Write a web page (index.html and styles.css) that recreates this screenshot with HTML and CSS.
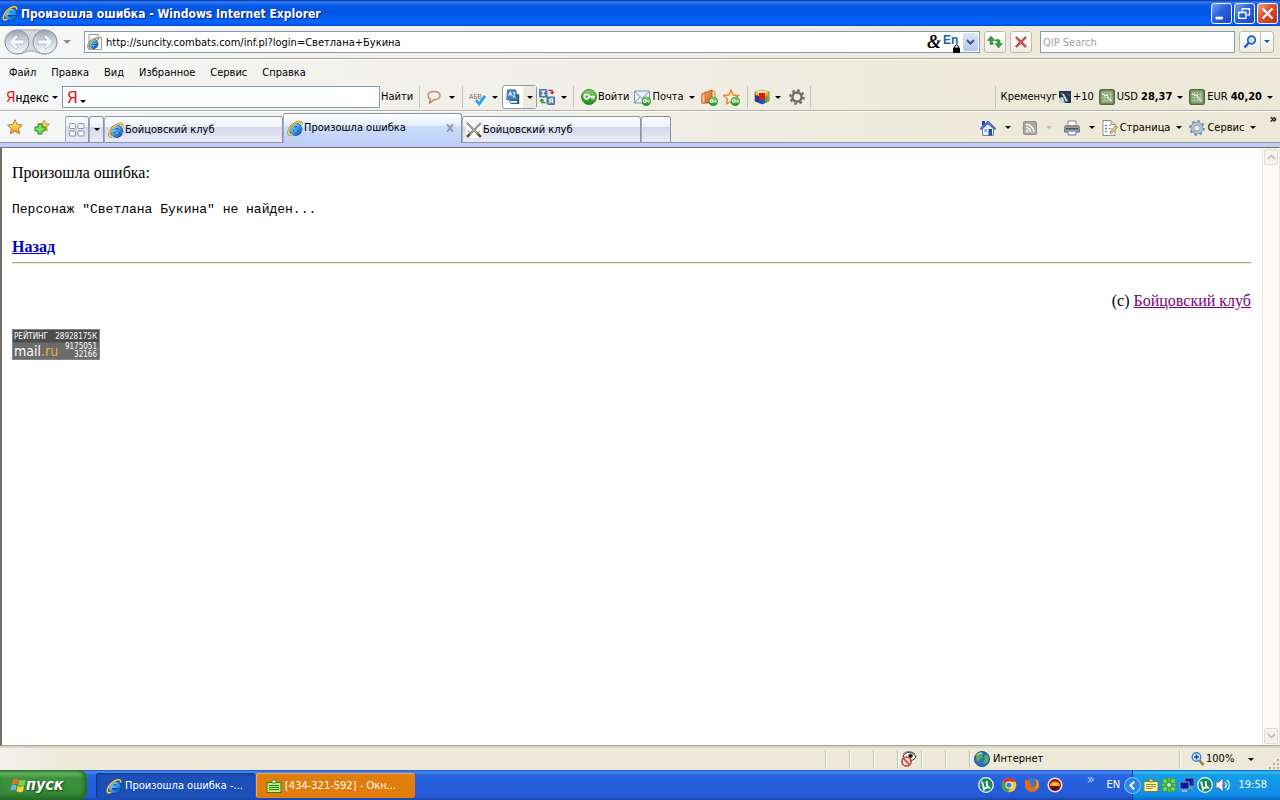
FILE: index.html
```html
<!DOCTYPE html>
<html lang="ru">
<head>
<meta charset="utf-8">
<title>Произошла ошибка</title>
<link rel="stylesheet" href="styles.css">
</head>
<body>
<svg class="defs" aria-hidden="true">
  <defs>
    <linearGradient id="gBlue" x1="0" y1="0" x2="1" y2="1"><stop offset="0" stop-color="#8fdcff"/><stop offset=".5" stop-color="#3aa0ee"/><stop offset="1" stop-color="#0f5cc0"/></linearGradient>
    <linearGradient id="gGold" x1="0" y1="0" x2="0" y2="1"><stop offset="0" stop-color="#fff3a0"/><stop offset="1" stop-color="#f49a12"/></linearGradient>
    <linearGradient id="gGreen" x1="0" y1="0" x2="0" y2="1"><stop offset="0" stop-color="#8bd46b"/><stop offset="1" stop-color="#1c8a1c"/></linearGradient>
    <linearGradient id="gSilver" x1="0" y1="0" x2="0" y2="1"><stop offset="0" stop-color="#9aa3b0"/><stop offset=".45" stop-color="#cfd6df"/><stop offset="1" stop-color="#eefaff"/></linearGradient>
    <linearGradient id="gOrange" x1="0" y1="0" x2="1" y2="1"><stop offset="0" stop-color="#ffb27a"/><stop offset="1" stop-color="#e0590d"/></linearGradient>
  </defs>
  <symbol id="ie" viewBox="0 0 16 16">
    <path d="M13 10.800A4.500 4.500 0 1 1 13.200 8.600H5" fill="none" stroke="#0c3f8c" stroke-width="4"/>
    <path d="M13 10.800A4.500 4.500 0 1 1 13.200 8.600H5" fill="none" stroke="url(#gBlue)" stroke-width="2.900"/>
    <path d="M14.500 4.500C15.200 1 12 .8 8 3.200 3.500 6 .8 10.500 1.300 13.500c.4 1.800 2.200 1.600 4 .7" fill="none" stroke="#8e6a2c" stroke-width="2"/>
    <path d="M14.500 4.500C15.200 1 12 .8 8 3.200 3.500 6 .8 10.500 1.300 13.500c.4 1.800 2.200 1.600 4 .7" fill="none" stroke="#ffcf4d" stroke-width="1.300"/>
  </symbol>
  <symbol id="page-ie" viewBox="0 0 16 16">
    <path d="M2 .5h9l3.500 3.500v11.500H2z" fill="#fff" stroke="#9a9a9a"/><path d="M11 .5V4h3.500" fill="#e6e6e6" stroke="#9a9a9a"/>
    <use href="#ie" x="0" y="3" width="12" height="12"/>
  </symbol>
  <symbol id="star" viewBox="0 0 16 16"><path d="M8 .8l2.200 4.700 5.100.6-3.800 3.500 1 5.100L8 12.200l-4.500 2.500 1-5.100L.7 6.100l5.100-.6z" fill="url(#gGold)" stroke="#b8791a"/></symbol>
  <symbol id="star-add" viewBox="0 0 16 16"><use href="#star" x="4" y="0" width="12" height="13"/><path d="M4 5h4v3h3v4H8v3H4v-3H1V8h3z" fill="#7be05a" stroke="#1b861b"/></symbol>
  <symbol id="tiles" viewBox="0 0 16 14"><g fill="#f6f8ff" stroke="#8b90a3"><rect x=".5" y=".5" width="6" height="5" rx="1"/><rect x="9" y=".5" width="6" height="5" rx="1"/><rect x=".5" y="8" width="6" height="5" rx="1"/><rect x="9" y="8" width="6" height="5" rx="1"/></g></symbol>
  <symbol id="swords" viewBox="0 0 16 16"><rect width="16" height="16" fill="#fff"/><path d="M1 1l11 11M15 1L4 12" stroke="#78787a" stroke-width="2"/><path d="M1 1l10 10M15 1L5 11" stroke="#d5d5d0" stroke-width=".6"/><path d="M10 12l4-3M6 12L2 9" stroke="#8a7454" stroke-width="1"/><path d="M12 12l3 3M4 12l-3 3" stroke="#6b4a2c" stroke-width="2.600"/></symbol>
  <symbol id="navpair" viewBox="0 0 56 28">
    <path d="M14 2h28a12 12 0 0 1 0 24c-8 0-8-3-14-3s-6 3-14 3A12 12 0 0 1 14 2z" fill="#d5d7da" stroke="#a9abb0"/>
    <circle cx="14" cy="14" r="12" fill="url(#gSilver)" stroke="#8e98a5"/><circle cx="42" cy="14" r="12" fill="url(#gSilver)" stroke="#8e98a5"/>
    <path d="M6 14l7-7 2 2-3 3h9v4h-9l3 3-2 2z" fill="#fff" stroke="#a9b4c0" stroke-width=".8"/><path d="M50 14l-7-7-2 2 3 3h-9v4h9l-3 3 2 2z" fill="#fff" stroke="#a9b4c0" stroke-width=".8"/>
  </symbol>
  <symbol id="refresh" viewBox="0 0 16 14"><path d="M4 1L.5 5.500H3V9.500h3V8H5.500V5.500H8z" fill="#3ba13b" stroke="#1e7a22" stroke-width=".5"/><path d="M11.500 13L8 8.500h2.500C10.500 6 9.500 6 8 5.500 10 3.500 13 4 13 6.500v2h2.500z" fill="#3ba13b" stroke="#1e7a22" stroke-width=".5"/></symbol>
  <symbol id="stop" viewBox="0 0 12 12"><path d="M1 1l10 10M11 1L1 11" stroke="#8f2f32" stroke-width="2.400"/><path d="M1 1l10 10M11 1L1 11" stroke="#dd6467" stroke-width="1.200"/></symbol>
  <symbol id="lens" viewBox="0 0 14 14"><circle cx="8.500" cy="5" r="3.800" fill="#cfe4ff" stroke="#1c58d0" stroke-width="1.700"/><path d="M5.600 8L1.500 12.500" stroke="#1c58d0" stroke-width="2.400"/></symbol>
  <symbol id="lock" viewBox="0 0 8 10"><path d="M2 5V3a2 2 0 0 1 4 0v2" fill="none" stroke="#000" stroke-width="1.200"/><path d="M0 4h8v6H0z"/></symbol>
  <symbol id="bubble" viewBox="0 0 14 14"><path d="M7 1.500c3.500 0 6 1.600 6 4s-2.500 4.200-6 4.200L2.500 13l.8-3.900C1.800 8.300 1 7 1 5.500c0-2.400 2.500-4 6-4z" fill="#f4f2ee" stroke="#d2734d" stroke-width="1.300"/><path d="M1.500 5C2 3 4 1.800 7 1.600c3.500 0 6 1.700 5.800 4" fill="none" stroke="#b5a69d"/></symbol>
  <symbol id="check" viewBox="0 0 11 11"><path d="M1 5l3.300 4L10 .8" fill="none" stroke="#1ba4f5" stroke-width="2.600"/></symbol>
  <symbol id="books" viewBox="0 0 16 18"><path d="M5 6h10v11H6z" fill="#1d6275"/><path d="M4 13h9v3H5z" fill="#f4f9ff" stroke="#0e4355" stroke-width=".7"/><path d="M2 1h9l2 11H1z" fill="#4688bd" stroke="#2c6799"/><path d="M3 8l2-5 2 5M3.800 6h2.500M8 4h2L8.500 9H11" fill="none" stroke="#fff"/></symbol>
  <symbol id="translate" viewBox="0 0 17 17"><path d="M.5.500h7l1 1v7h-8z" fill="#5c86b4" stroke="#4771a0"/><path d="M2.500 2.500h4M4.500 2.500v4M2.500 6.500h4" stroke="#fff" stroke-width="1.200"/><path d="M8.500 8.500h8v8h-7l-1-1z" fill="#5c86b4" stroke="#4771a0"/><path d="M14.500 15v-4.500h-2a1 1 0 0 0 0 2.500h2M12.500 13L11 15" fill="none" stroke="#fff" stroke-width="1.200"/><path d="M10 1.500h4V4M12 3l2 2 2-2" fill="none" stroke="#bd2830" stroke-width="1.300"/><path d="M7 14.500H3V12M1 13l2-2 2 2" fill="none" stroke="#169222" stroke-width="1.300"/></symbol>
  <symbol id="key" viewBox="0 0 16 16"><circle cx="8" cy="8" r="7.500" fill="url(#gGreen)" stroke="#278c2c"/><circle cx="5.600" cy="7.600" r="2.300" fill="none" stroke="#fff" stroke-width="1.700"/><path d="M8 7.600h6M12.500 8v2.500M10.500 8v1.500" stroke="#fff" stroke-width="1.500"/></symbol>
  <symbol id="mail-key" viewBox="0 0 17 17"><path d="M.5 2h15v12H.5z" fill="#e7f0fa" stroke="#7895b5"/><path d="M.5 2L8 9.500 15.500 2M.5 14L6 8" fill="none" stroke="#7895b5"/><use href="#key" x="7.500" y="7.500" width="9.500" height="9.500"/></symbol>
  <symbol id="book-key" viewBox="0 0 17 17"><path d="M1 5l10-4v13H1z" fill="url(#gOrange)" stroke="#bd5b1d"/><path d="M1 5l3-1v10H1z" fill="#ffc597" stroke="#bd5b1d" stroke-width=".7"/><path d="M11 1l3 2v6" fill="none" stroke="#d97a3a"/><use href="#key" x="7.500" y="7.500" width="9.500" height="9.500"/></symbol>
  <symbol id="star-key" viewBox="0 0 17 17"><path d="M8 1l2 5 5.500.5-4 3.500 1 5L8 12.500 3.500 15l1-5-4-3.500L6 6z" fill="#fff3e2" stroke="#ec8524" stroke-width="1.400"/><use href="#key" x="7.500" y="7.500" width="9.500" height="9.500"/></symbol>
  <symbol id="cube" viewBox="0 0 16 16"><path d="M1 3l7-2 7 2v9l-7 3-7-3z" fill="#e8bd22" stroke="#827d56"/><path d="M1 3l7 2 7-2-7-2z" fill="#f0e9ac"/><path d="M1 6l4 1v7l-4-2z" fill="#1f3f96"/><path d="M11 7l4-1v6l-4 2z" fill="#72a83b"/><path d="M5 4h6v7H5z" fill="#dc1a1b"/><path d="M5 11h6v3l-3 1-3-1z" fill="#214ec4"/></symbol>
  <symbol id="gear" viewBox="0 0 16 16"><circle cx="8" cy="8" r="6.700" fill="none" stroke="currentColor" stroke-width="2.200" stroke-dasharray="2.630 2.630"/><circle cx="8" cy="8" r="4.600" fill="none" stroke="currentColor" stroke-width="2.500"/></symbol>
  <symbol id="weather" viewBox="0 0 12 12"><rect width="12" height="12" fill="#233547"/><path d="M0 12V7l4-1 2 6zM2 2l3 1 4 7-2 1-3-6z" fill="#c3d4df"/><path d="M7 1l4 2v3z" fill="#46637c"/></symbol>
  <symbol id="chart" viewBox="0 0 16 16"><rect x=".8" y=".8" width="14.400" height="14.400" rx="2" fill="#8da678" stroke="#4d6e40" stroke-width="1.600"/><path d="M3 5.500h10M3 8.500h10M3 11.500h10M5.500 3v10M8.500 3v10M11.500 3v10" stroke="#b4c6a5" stroke-width=".8"/><path d="M3 4l3 3 2-1 2 4 3 2" fill="none" stroke="#fff" stroke-width="1"/></symbol>
  <symbol id="home" viewBox="0 0 16 16"><path d="M2.500 8v7.500h11V8L8 3z" fill="#e8eefc" stroke="#6d83b2"/><path d="M0 8.500L8 1l8 7.500-1.500 1L8 3.800 1.500 9.500z" fill="#5a78c9" stroke="#2e4b99" stroke-width=".7"/><path d="M2 1h3v3L2 6z" fill="#2743a8"/><path d="M8.500 9h3.500v6.500H8.500z" fill="#234fa3"/><path d="M4.500 9H7v3H4.500z" fill="#8fa5cd"/></symbol>
  <symbol id="rss" viewBox="0 0 14 14"><rect x=".5" y=".5" width="13" height="13" rx="1.500" fill="#aaa9a3" stroke="#8f8e88"/><circle cx="4" cy="10.300" r="1.300" fill="#fff"/><path d="M3 6.500a4.500 4.500 0 0 1 4.500 4.800M3 3.300a7.800 7.800 0 0 1 7.800 8" fill="none" stroke="#fff" stroke-width="1.500"/></symbol>
  <symbol id="printer" viewBox="0 0 16 16"><path d="M4 1h8v5H4z" fill="#fff" stroke="#85888d"/><path d="M1 6h14l.5 6H.5z" fill="#a3a5ab" stroke="#66686e"/><path d="M2 8h12v1.500H2z" fill="#4f5258"/><path d="M4 11h8v4H4z" fill="#e4f2fd" stroke="#6780a0"/></symbol>
  <symbol id="sheet" viewBox="0 0 16 16"><path d="M1 .5h8l4 4v11H1z" fill="#fff" stroke="#8d9092"/><path d="M9 .5v4h4" fill="#ddd" stroke="#8d9092"/><path d="M3 5.500h2M3 8.500h2M3 11.500h2" stroke="#6c7fae" stroke-width="1.500"/><path d="M6.500 5.500h2M6.500 8.500h3" stroke="#9a9a9a"/><path d="M8 13.500l1-3 5-5 1.500 2-5 5z" fill="#f3c56b" stroke="#83683a" stroke-width=".7"/></symbol>
  <symbol id="cog" viewBox="0 0 16 16"><circle cx="8" cy="8" r="6.800" fill="none" stroke="#7894ad" stroke-width="2.200" stroke-dasharray="2.670 2.670"/><circle cx="8" cy="8" r="4.500" fill="none" stroke="#6985a0" stroke-width="3.500"/><circle cx="8" cy="8" r="4.500" fill="none" stroke="#a9c4dc" stroke-width="2.500"/></symbol>
  <symbol id="eye" viewBox="0 0 16 16"><path d="M2 5c3-5 10-5 13 1-2 4-8 5-12 1z" fill="#fff" stroke="#222" stroke-width="1"/><path d="M2 3C5-.5 11 0 14 3" fill="none" stroke="#777"/><circle cx="9.500" cy="5" r="2.400" fill="#555"/><circle cx="9.500" cy="5" r="1.200"/><circle cx="5.500" cy="10.500" r="4.500" fill="#fbe3df" stroke="#cc3b32" stroke-width="1.600"/><path d="M2.500 7.500l6 6" stroke="#cc3b32" stroke-width="1.600"/></symbol>
  <symbol id="globe" viewBox="0 0 16 16"><circle cx="8" cy="8" r="7.500" fill="#2d6fc0" stroke="#1e5078"/><path d="M2 4c2-3 5-3 7-2L8 5l1 2-3 1-1 3-3-3zM10 5l4-1 1 5-3 4-3-2 2-3z" fill="#51b05c"/><path d="M3 4c2-2 4-2 5-2" stroke="#d5f1dc" fill="none"/></symbol>
  <symbol id="zoom" viewBox="0 0 14 14"><path d="M8 8l4.500 5" stroke="#a6773c" stroke-width="2.500"/><circle cx="5.500" cy="5" r="4.300" fill="#d3eaff" stroke="#4981c5" stroke-width="1.400"/><path d="M3 5h5M5.500 2.500v5" stroke="#174ab5" stroke-width="1.600"/></symbol>
  <symbol id="winflag" viewBox="0 0 16 16"><path d="M3 2.500c2-1.500 3.500-1.200 5-.3L7 7.500C5.500 6.500 4 6.500 2 7.800z" fill="#f3682f"/><path d="M9 2.700c2 1 4 1 6.500-.2l-1 5.500c-2.500 1.200-4.500 1-6.500 0z" fill="#8bd13f"/><path d="M1.500 8.800c2-1.500 3.500-1.200 5-.3L5.500 13.500c-1.500-1-3-1-5 .3z" fill="#72aef8"/><path d="M7.500 9c2 1 4 1 6.500-.2l-1 5.500c-2.500 1.200-4.500 1-6.500 0z" fill="#fbd43b"/></symbol>
  <symbol id="note" viewBox="0 0 16 14"><path d="M1 3.500h14v10H1z" fill="#fff6a9" stroke="#7b7c28"/><path d="M6 1h4v3H6z" fill="#e6d53d" stroke="#7b7c28" stroke-width=".8"/><path d="M3 6.500h10M3 8.500h10M3 10.500h7" stroke="#8f8e37"/></symbol>
  <symbol id="note-green" viewBox="0 0 16 14"><path d="M1 3.500h14v10H1z" fill="#b6ed80" stroke="#327f1a"/><path d="M6 1h4v3H6z" fill="#e1f7a2" stroke="#327f1a" stroke-width=".8"/><path d="M3 6.500h10M3 8.500h10M3 10.500h10" stroke="#33801b"/></symbol>
  <symbol id="utorrent" viewBox="0 0 16 16"><circle cx="8" cy="8" r="7.300" fill="#18885b" stroke="#e9f7ef" stroke-width="1.300"/><path d="M4 4.500l1.500 5.500c.5 1.500 3.500 1.500 3.800-.5L8.500 4M9.300 9c.6 1.700 1.700 2 3 1.500M5.300 9.500l1 4" fill="none" stroke="#fff" stroke-width="1.800"/></symbol>
  <symbol id="chrome" viewBox="0 0 16 16"><circle cx="8" cy="8" r="7.300" fill="#f5cb30"/><path d="M8 8L1.700 4.300A7.300 7.300 0 0 1 14.500 4.800H8z" fill="#d7372b"/><path d="M8 8L1.700 4.300A7.300 7.300 0 0 0 7 15.200L10 10z" fill="#43a147"/><circle cx="8" cy="8" r="3.500" fill="#fff"/><circle cx="8" cy="8" r="2.600" fill="#3e83cf"/></symbol>
  <symbol id="firefox" viewBox="0 0 16 16"><circle cx="8" cy="7.500" r="6.500" fill="#3c78c0"/><path d="M1 2l2 2C4 3.200 5.500 3.200 7 4L5.500 6 8 7.500 6 9c1.500 2 4 1.500 5.500-.5C12.500 6 12 3 10.500 1.500c4 1.500 5.500 5.500 4.500 8.500-1 3-4 5-7 5-4 0-7-3-7-6.500C1 6.500.5 4.500 1 2z" fill="#e5691a"/><path d="M12.500 3c2 3 1.500 6.500-1 8.500" fill="none" stroke="#f7b52e" stroke-width="1.300"/></symbol>
  <symbol id="qip" viewBox="0 0 16 16"><circle cx="8" cy="8" r="6.800" fill="#8f1713" stroke="#f5dad3" stroke-width="1.600"/><path d="M3 9c0-6 10-6 10 0z" fill="#f39b2f"/><path d="M4 9.500h8v2.500c-2 2-6 2-8 0z" fill="#4d0c10"/><path d="M5 7h6" stroke="#ffd75a" stroke-width="1.500"/></symbol>
  <symbol id="flower" viewBox="0 0 16 16"><g fill="#7bd648" stroke="#378f22" stroke-width=".6"><path d="M8 8L6.500 1 9.500 1zM8 8L6.500 15h3zM8 8L1 6.500v3zM8 8l7-1.500v3z"/><circle cx="4" cy="4" r="2.500"/><circle cx="12" cy="4" r="2.500"/><circle cx="4" cy="12" r="2.500"/><circle cx="12" cy="12" r="2.500"/></g><circle cx="8" cy="8" r="2" fill="#c9f39c"/></symbol>
  <symbol id="net" viewBox="0 0 16 16"><path d="M6 1h9v8H6z" fill="#0c2494" stroke="#6f8bc4"/><path d="M9 10h5v2H9z" fill="#8090b6"/><path d="M1 5h9v7H1z" fill="#0a1c9c" stroke="#7d99d0"/><path d="M3 13h5v2H3z" fill="#aab4ca"/></symbol>
  <symbol id="sound" viewBox="0 0 16 16"><path d="M1 5h3l4-4v14l-4-4H1z" fill="#f4f5f5" stroke="#66737e"/><path d="M10 5c1.500 2 1.500 4 0 6M12 3c3 3 3 7 0 10" fill="none" stroke="#fff" stroke-width="1.200"/></symbol>
  <symbol id="grip" viewBox="0 0 12 12"><path d="M9 1h2v2H9zM9 5h2v2H9zM9 9h2v2H9zM5 5h2v2H5zM5 9h2v2H5zM1 9h2v2H1z" fill="#b9b5a3"/></symbol>
</svg>

<header class="titlebar">
  <svg class="i16"><use href="#ie"/></svg>
  <h1>Произошла ошибка - Windows Internet Explorer</h1>
  <div class="winbtns">
    <button class="wb" aria-label="Свернуть"><svg viewBox="0 0 21 21"><path d="M4 14h8v3H4z" fill="#fff"/></svg></button>
    <button class="wb" aria-label="Восстановить"><svg viewBox="0 0 21 21"><path d="M8 8V5h8v7h-3M8 5.500h8M4 9h8v7H4zM4 9.500h8" fill="none" stroke="#fff" stroke-width="1.400"/></svg></button>
    <button class="wb close" aria-label="Закрыть"><svg viewBox="0 0 21 21"><path d="M5 5l11 11M16 5L5 16" stroke="#fff" stroke-width="2.400"/></svg></button>
  </div>
</header>

<div class="chrome">
  <div class="nav">
    <button class="plain" aria-label="Назад и вперёд"><svg class="navpair"><use href="#navpair"/></svg></button>
    <button class="plain dd grey" aria-label="История"></button>
    <div class="address">
      <svg class="i16"><use href="#page-ie"/></svg>
      <input type="text" aria-label="Адрес" value="http://suncity.combats.com/inf.pl?login=Светлана+Букина">
      <span class="amp">&amp;</span><span class="en">En<svg><use href="#lock"/></svg></span>
      <button class="combo" aria-label="Список адресов"><svg viewBox="0 0 9 6"><path d="M1 1l3.500 3.500L8 1" fill="none" stroke="#40507c" stroke-width="2"/></svg></button>
    </div>
    <button class="sq" aria-label="Обновить"><svg class="i16"><use href="#refresh"/></svg></button>
    <button class="sq" aria-label="Стоп"><svg class="i12"><use href="#stop"/></svg></button>
    <input class="search" type="text" aria-label="Поиск" placeholder="QIP Search">
    <div class="split"><button aria-label="Найти"><svg class="i14"><use href="#lens"/></svg></button><button class="dd blue" aria-label="Параметры поиска"></button></div>
  </div>

  <nav class="menu">
    <button>Файл</button><button>Правка</button><button>Вид</button><button>Избранное</button><button>Сервис</button><button>Справка</button>
  </nav>

  <div class="yandex">
    <button class="logo"><b>Я</b>ндекс</button><button class="dd" aria-label="Меню Яндекса"></button>
    <div class="ybox"><span class="ya">Я</span><i class="dd low"></i><input type="text" aria-label="Поиск в Яндексе"></div>
    <button class="find">Найти</button>
    <div class="grp g1"><button aria-label="Комментарии"><svg class="i14"><use href="#bubble"/></svg></button><button class="dd" aria-label="Ещё"></button></div>
    <div class="grp g2">
      <button class="abv" aria-label="Орфография"><small>АБВ</small><svg><use href="#check"/></svg></button><button class="dd" aria-label="Ещё"></button>
      <div class="pressed"><button aria-label="Словарь"><svg class="i16"><use href="#books"/></svg></button><button class="dd" aria-label="Ещё"></button></div>
      <button aria-label="Перевод"><svg class="i16"><use href="#translate"/></svg></button><button class="dd" aria-label="Ещё"></button>
    </div>
    <div class="grp g3">
      <button class="lbl"><svg class="i16"><use href="#key"/></svg>Войти</button>
      <button class="lbl mail"><svg class="i17"><use href="#mail-key"/></svg>Почта</button><button class="dd" aria-label="Ещё"></button>
      <button class="mid" aria-label="Закладки"><svg class="i17"><use href="#book-key"/></svg></button>
      <button aria-label="Избранное"><svg class="i17"><use href="#star-key"/></svg></button>
    </div>
    <div class="grp g4"><button aria-label="Виджеты"><svg class="i16"><use href="#cube"/></svg></button><button class="dd" aria-label="Ещё"></button><button class="gearbtn" aria-label="Настройки"><svg class="i16"><use href="#gear"/></svg></button></div>
    <div class="rates">
      <button class="lbl wx">Кременчуг <svg class="i12"><use href="#weather"/></svg>+10</button>
      <button class="lbl"><svg class="i16"><use href="#chart"/></svg>USD <b>28,37</b></button><button class="dd" aria-label="USD"></button>
      <button class="lbl"><svg class="i16"><use href="#chart"/></svg>EUR <b>40,20</b></button><button class="dd" aria-label="EUR"></button>
    </div>
  </div>

  <div class="tabrow">
    <button class="fav" aria-label="Избранное"><svg class="i16"><use href="#star"/></svg></button>
    <button class="fav" aria-label="Добавить"><svg class="i16"><use href="#star-add"/></svg></button>
    <div class="tabs">
      <button class="tab mini" aria-label="Быстрые вкладки"><svg class="i16"><use href="#tiles"/></svg></button>
      <button class="tab ddtab" aria-label="Список вкладок"><i class="dd"></i></button>
      <button class="tab"><svg class="i16"><use href="#ie"/></svg>Бойцовский клуб</button>
      <button class="tab active"><svg class="i16"><use href="#ie"/></svg>Произошла ошибка<svg class="x" viewBox="0 0 8 8"><path d="M1 0l6 8M7 0L1 8" stroke="#8c95a3" stroke-width="1.800"/></svg></button>
      <button class="tab"><svg class="i16"><use href="#swords"/></svg>Бойцовский клуб</button>
      <button class="tab new" aria-label="Новая вкладка"></button>
    </div>
    <div class="cmds">
      <button aria-label="Домой"><svg class="i16"><use href="#home"/></svg></button><button class="dd" aria-label="Ещё"></button>
      <button aria-label="Каналы"><svg class="i14"><use href="#rss"/></svg></button><button class="dd off" aria-label="Ещё"></button>
      <button aria-label="Печать"><svg class="i16"><use href="#printer"/></svg></button><button class="dd" aria-label="Ещё"></button>
      <button class="lbl"><svg class="i16"><use href="#sheet"/></svg>Страница</button><button class="dd" aria-label="Ещё"></button>
      <button class="lbl"><svg class="i16"><use href="#cog"/></svg>Сервис</button><button class="dd" aria-label="Ещё"></button>
      <span class="more">»</span>
    </div>
  </div>
</div>

<main class="view">
  <article>
    <p>Произошла ошибка:</p>
    <pre>Персонаж "Светлана Букина" не найден...</pre>
    <p class="back"><a href="#">Назад</a></p>
    <hr>
    <p class="copy">(c) <a href="#">Бойцовский клуб</a></p>
    <a class="counter" href="#">
      <span class="c1">РЕЙТИНГ</span><span class="c2">28928175К</span>
      <span class="c3">mail<em>.ru</em></span><span class="c4">9175051<br>32166</span>
    </a>
  </article>
  <div class="scroll">
    <button aria-label="Вверх"><svg viewBox="0 0 9 6"><path d="M1 5l3.500-3.500L8 5" fill="none" stroke="#c4c2b6" stroke-width="1.800"/></svg></button>
    <button aria-label="Вниз"><svg viewBox="0 0 9 6"><path d="M1 1l3.500 3.500L8 1" fill="none" stroke="#c4c2b6" stroke-width="1.800"/></svg></button>
  </div>
</main>

<footer class="status">
  <span class="cell"></span><span class="cell"></span><span class="cell"></span>
  <span class="cell"><svg class="i16"><use href="#eye"/></svg></span><span class="cell"></span><span class="cell"></span>
  <span class="zone"><svg class="i16"><use href="#globe"/></svg>Интернет</span>
  <button class="zoomer"><svg class="i14"><use href="#zoom"/></svg>100%<i class="dd"></i></button>
  <svg class="i12 grip"><use href="#grip"/></svg>
</footer>

<div class="taskbar">
  <button class="start"><svg><use href="#winflag"/></svg>пуск</button>
  <button class="task on"><svg class="i16"><use href="#ie"/></svg>Произошла ошибка -...</button>
  <button class="task alert"><svg class="i16"><use href="#note-green"/></svg>[434-321-592] - Окн...</button>
  <div class="quick"><svg class="i16"><use href="#utorrent"/></svg><svg class="i16"><use href="#chrome"/></svg><svg class="i16"><use href="#firefox"/></svg><svg class="i16"><use href="#qip"/></svg></div>
  <span class="chev">»</span>
  <span class="lang">EN</span>
  <div class="tray">
    <button class="expand" aria-label="Показать значки"><svg viewBox="0 0 16 16"><circle cx="8" cy="8" r="7.500" fill="#2a86e8" stroke="#79c1ff"/><path d="M9.500 4.500L6 8l3.500 3.500" fill="none" stroke="#fff" stroke-width="2"/></svg></button>
    <svg class="i16"><use href="#note"/></svg><svg class="i16"><use href="#flower"/></svg><svg class="i16"><use href="#net"/></svg><svg class="i16"><use href="#utorrent"/></svg><svg class="i16"><use href="#sound"/></svg>
    <time>19:58</time>
  </div>
</div>
</body>
</html>
```
FILE: styles.css
```css
* { box-sizing: border-box; }
body {
  margin: 0; min-height: 100vh; display: flex; flex-direction: column;
  font: 11px/14px "DejaVu Sans Condensed", Tahoma, sans-serif; color: #000; background: #ece9d8;
}
.defs { position: absolute; width: 0; height: 0; }
button { font: inherit; color: inherit; background: none; border: 0; padding: 0; margin: 0; display: flex; align-items: center; white-space: nowrap; flex: none; }
input { font: inherit; min-width: 0; }
svg { flex: none; display: block; }
.i17 { width: 17px; height: 17px; }
.i16 { width: 16px; height: 16px; }
.i14 { width: 14px; height: 14px; }
.i12 { width: 12px; height: 12px; }

.dd { width: 5px; flex: none; display: block; }
.dd::before { content: ""; display: block; border: solid transparent; border-width: 3px 3px 0; border-top-color: #000; width: 0; }
.dd.grey::before { border-width: 4px 4px 0; border-top-color: #8e9196; }
.dd.off::before { border-top-color: #c2c0b4; }
.dd.blue::before { border-top-color: #1c50b8; }

.titlebar {
  height: 26px; display: flex; align-items: center; padding: 0 2px;
  background: linear-gradient(#0831a8 0, #2f80f5 2px, #0a5be8 5px, #0053e1 12px, #0464fb 20px, #0460f8 24px, #0343c8 26px);
}
.titlebar h1 { flex: 1; margin: 1px 0 0 3px; font: bold 12px/16px "DejaVu Sans Condensed", sans-serif; color: #fff; text-shadow: 1px 1px 1px #0a1883; }
.winbtns { display: flex; gap: 2px; }
.wb { width: 21px; height: 21px; border: 1px solid #fff; border-radius: 3px; background: linear-gradient(135deg, #7ba0f2, #2a5fe0 45%, #1c48c4); }
.wb svg { width: 19px; height: 19px; }
.wb.close { background: linear-gradient(135deg, #f0a08a, #dc5030 45%, #bf3412); }

.chrome { background: linear-gradient(90deg, #f5f6f7 0, #f1f0ea 35%, #ece9d8 85%); }
.nav { height: 33px; display: flex; align-items: center; padding: 0 6px 0 3px; border-bottom: 1px solid #aaa698; }
.navpair { width: 56px; height: 28px; }
.nav .dd.grey { width: 8px; margin: 0 13px 0 4px; }
.address { flex: 1; height: 22px; display: flex; align-items: center; border: 1px solid #7f9db9; background: #fff; padding: 0 1px 0 2px; }
.address input { flex: 1; border: 0; background: none; padding: 1px 0 0 3px; outline: 0; }
.amp { font: bold italic 18px/20px "Liberation Serif", serif; width: 16px; }
.en { font: bold 12px/16px "Liberation Sans", sans-serif; color: #1866a5; position: relative; width: 20px; margin-bottom: 4px; }
.en svg { position: absolute; right: 3px; bottom: -5px; width: 7px; height: 9px; }
.combo { width: 15px; height: 18px; border-radius: 2px; justify-content: center; background: linear-gradient(#dbe5fc, #b3c7f5); }
.combo svg { width: 9px; height: 6px; }
.sq, .split { height: 22px; border: 1px solid #bdbcb4; border-radius: 3px; background: linear-gradient(#fff, #ecebe6); }
.sq { width: 22px; justify-content: center; margin-left: 4px; }
.search { width: 195px; height: 22px; margin: 0 4px 0 8px; border: 1px solid #7f9db9; background: #fff; padding: 1px 2px 0; }
.search::placeholder { color: #a5a296; opacity: 1; }
.split { display: flex; width: 35px; }
.split button:first-child { width: 21px; justify-content: center; border-right: 1px solid #bdbcb4; }
.split .dd { margin: 8px 0 0 3px; align-self: flex-start; }

.menu { height: 25px; display: flex; align-items: center; gap: 15px; padding: 1px 0 0 9px; border-top: 1px solid #fff; }

.yandex { height: 27px; display: flex; align-items: center; padding: 0 8px 0 6px; border-bottom: 1px solid #b3b0a4; }
.yandex .logo { font: 12px/18px Roboto, sans-serif; width: 46px; align-items: baseline; }
.logo b, .ya { font-weight: normal; color: #e8141b; }
.logo b { font-size: 15px; }
.ybox { width: 318px; height: 22px; margin: 0 1px 0 5px; border: 1px solid #7f9db9; background: #fff; display: flex; align-items: center; padding-left: 4px; }
.ya { font: 17px/20px Roboto, sans-serif; width: 13px; }
.low { margin-top: 8px; }
.ybox input { flex: 1; border: 0; background: none; outline: 0; }
.find { width: 38px; }
.grp { display: flex; align-items: center; height: 22px; border-left: 1px solid #c8c5b5; }
.g1 { padding-left: 7px; gap: 8px; width: 43px; }
.g2 { padding-left: 6px; width: 111px; }
.g2 > .dd { margin-left: 6px; }
.abv { width: 17px; display: block; height: 18px; position: relative; }
.abv small { font: 7px/7px "DejaVu Sans Mono", monospace; color: #777; display: block; text-align: left; }
.abv svg { width: 11px; height: 11px; position: absolute; right: 0; bottom: 0; }
.pressed { width: 35px; height: 24px; margin: 0 2px 0 5px; display: flex; align-items: center; border: 1px solid #8c9bab; border-radius: 3px; background: #fff; }
.pressed button:first-child { width: 20px; justify-content: center; }
.pressed .dd { width: 13px; height: 22px; background: #eceadf; padding: 0 4px; display: flex; }
.lbl { gap: 2px; }
.lbl b { margin-left: 1px; }
.g3 { padding-left: 7px; width: 174px; }
.g3 .lbl { gap: 1px; }
.g3 .mail { margin: 0 5px; }
.g3 .mid { margin: 0 5px 0 7px; }
.g4 { padding-left: 6px; width: 64px; border-right: 1px solid #c8c5b5; }
.g4 .dd { margin: 0 9px 0 5px; }
.gearbtn { color: #6d6d6b; }
.rates { margin-left: auto; height: 22px; display: flex; align-items: center; gap: 5px; padding-left: 5px; border-left: 1px solid #c8c5b5; }
.rates .dd + .lbl { margin-left: 2px; }

.tabrow { height: 36px; display: flex; padding-left: 7px; border-top: 1px solid #fff; border-bottom: 4px solid #c2cdf3; box-shadow: inset 0 -1px #8c93a8; }
.fav { width: 27px; height: 30px; }
.tabs { display: flex; align-items: flex-end; margin-left: 4px; }
.tab { width: 179px; height: 27px; gap: 1px; padding: 0 3px; border: 1px solid #8c93a8; border-left-color: #a8adbd; border-radius: 3px 3px 0 0; background: linear-gradient(#fdfdff 0, #eef0f8 40%, #d4d8ec 41%, #e9ecf7 100%); }
.mini { width: 24px; padding: 0 3px; }
.mini svg { height: 14px; }
.ddtab { width: 15px; padding: 0 4px; }
.active { height: 30px; border-bottom: 0; padding-bottom: 2px; background: linear-gradient(#fff 0, #e3eefd 40%, #cadefb 41%, #bfd0f8 100%); }
.x { width: 8px; height: 8px; margin: 0 4px 0 auto; }
.tab.new { width: 30px; }
.cmds { margin-left: auto; height: 31px; display: flex; align-items: center; padding-right: 3px; gap: 9px; }
.cmds .dd + button { margin-left: 4px; }
.cmds .lbl + .dd { margin-left: -3px; }
.cmds .dd + .lbl { margin-left: -1px; }
.more { font: bold 13px/14px "DejaVu Sans Condensed", sans-serif; align-self: flex-start; margin-left: 5px; }

.view { flex: 1; display: flex; background: #fff; border: solid #716f64; border-width: 1px 0 0 2px; border-right: 1px solid #ece9d8; border-bottom: 1px solid #aaa79a; }
article { flex: 1; padding: 16px 11px 0 10px; font: 16px/18px "Liberation Serif", "Times New Roman", serif; }
article p { margin: 0; }
article pre { margin: 20px 0; font: 13px/16px "Liberation Mono", monospace; }
.back { font-weight: bold; }
.back a { color: #00c; }
hr { height: 2px; margin: 6px 0 28px; border: 0; border-top: 1px solid #aca899; border-bottom: 1px solid #ece9d8; }
.copy { text-align: right; }
.copy a { color: #800080; }
.counter { width: 88px; height: 31px; margin-top: 19px; display: grid; grid-template-columns: 38px 1fr; grid-template-rows: 12px 1fr; padding: 1px 2px 0 1px; border: 1px solid #858585; background: linear-gradient(#4d4d4d 12px, #6b6b6b 13px); color: #fff; font: 8px/8px "DejaVu Sans Condensed", sans-serif; text-decoration: none; }
.c1, .c2 { padding-top: 2px; }
.c2, .c4 { text-align: right; }
.c3 { font: 14px/16px "DejaVu Sans Condensed", sans-serif; white-space: nowrap; }
.c3 em { font-style: normal; color: #eeb13a; }
.scroll { width: 17px; display: flex; flex-direction: column; justify-content: space-between; background: #fbfaf7; border-left: 1px solid #eeede5; padding: 1px; }
.scroll button { width: 14px; height: 16px; border: 1px solid #e0dfd6; border-radius: 2px; background: #f4f3ee; justify-content: center; }
.scroll svg { width: 9px; height: 6px; }

.status { height: 24px; display: flex; align-items: center; border-top: 2px solid #d8d5c6; background: linear-gradient(90deg, #f2f1ec, #ece9d8 80px); }
.cell, .zone, .zoomer { height: 18px; border-left: 1px solid #c5c2b2; box-shadow: inset 1px 0 #fff; display: flex; align-items: center; }
.cell { width: 24px; padding-left: 3px; }
.cell:first-child { margin-left: auto; }
.zone { width: 210px; padding-left: 4px; gap: 3px; }
.zoomer { width: 89px; padding-left: 11px; gap: 1px; }
.zoomer .dd { margin-left: 13px; }
.grip { align-self: flex-end; }

.taskbar { height: 30px; display: flex; align-items: center; color: #fff; background: linear-gradient(#1f4fc0 0, #4a8df2 2px, #2b66e0 5px, #245edb 15px, #245bd9 26px, #1a45a8 30px); }
.start { width: 87px; height: 30px; padding: 0 0 0 10px; border-radius: 0 8px 8px 0; font: italic bold 16px/20px "DejaVu Sans Condensed", sans-serif; text-shadow: 1px 1px 2px #173e14; background: linear-gradient(#2b6e2b 0, #6bb568 3px, #3c933c 8px, #388e38 22px, #256925 30px); box-shadow: inset -3px 0 4px #246b24; }
.start svg { width: 16px; height: 16px; }
.task { width: 159px; height: 25px; padding: 1px 10px 0; gap: 3px; border-radius: 3px; }
.on { margin-left: 9px; background: #1c4fb8; box-shadow: inset 1px 1px 2px #0e2f7d; }
.alert { margin-left: 1px; background: #e27d0c; box-shadow: inset 1px 1px 1px #f7ad55; }
.quick { margin-left: auto; display: flex; gap: 7px; }
.chev { margin: -12px 12px 0 24px; font-size: 14px; color: #bcd4ff; }
.lang { width: 18px; }
.tray { align-self: stretch; display: flex; align-items: center; gap: 2px; padding-right: 13px; margin-left: 8px; border-left: 1px solid #0f3f96; background: linear-gradient(#0c59b9 0, #3bc0f8 2px, #139ee9 5px, #1290e8 24px, #0b6cc4 30px); }
.expand { margin-left: -9px; }
.expand svg { width: 17px; height: 17px; }
.tray time { margin-left: 5px; }
```
